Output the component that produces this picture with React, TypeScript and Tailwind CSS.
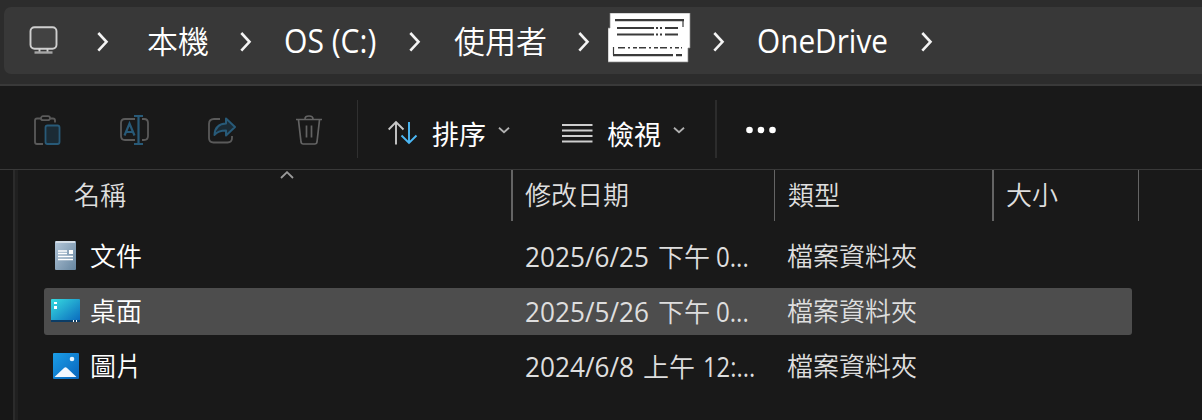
import React from 'react';

const Chevron = () => (
  <svg className="block h-5 w-3 shrink-0 translate-y-px" viewBox="0 0 12 20" fill="none" stroke="#f4f4f4" strokeWidth="2.6">
    <path d="M1.3 1 9.500 9.8 1.3 18.6" />
  </svg>
);

const SmallChevron = () => (
  <svg className="block h-[7px] w-3 shrink-0 translate-y-[3px]" viewBox="0 0 12 7" fill="none" stroke="#b0b0b0" strokeWidth="1.8">
    <path d="M1 .8 6 5.2 11 .8" />
  </svg>
);

const latin = "inline-block origin-left whitespace-pre font-['Open_Sans','Noto_Sans_CJK_TC',sans-serif]";
const cjk = "whitespace-nowrap font-['Noto_Sans_CJK_TC',sans-serif]";

const Monitor = () => (
  <svg className="block h-8 w-8" viewBox="0 0 32 32" fill="none" stroke="#cfcfcf" strokeWidth="1.9">
    <rect x="2.500" y="2.3" width="26" height="21.5" rx="4" fill="#424242" />
    <path d="M11.500 24v3M19.500 24v3" />
    <path d="M6.500 27.500h18" strokeWidth="2.400" stroke="#a5a5a5" />
  </svg>
);

const Scribble = () => (
  <svg className="block h-[50px] w-[83px]" viewBox="0 0 83 50" fill="none" stroke="#3a3a3a">
    <path d="M2 0h80v35h-2v14H0V15h2Z" fill="#fff" stroke="#8a8a8a" strokeWidth=".7" />
    <path d="M7 7.200h69M9 15h37M48 15h2M52 15h2M57 15h13M9 21.500h37M48 21.500h2M52 21.500h2M57 21.500h13M5 42.200h60M68 42.200h6" strokeWidth="2.200" />
    <path d="M75 7v7M5.500 34v8" strokeWidth="1.200" />
    <path d="M10 34.700h64" strokeWidth="1.600" strokeDasharray="7 3 2 3 4 2" />
  </svg>
);

const Paste = () => (
  <svg className="block h-8 w-8" viewBox="0 0 32 32" fill="none" stroke="#5a5a5a" strokeWidth="1.8">
    <path d="M9 4.500H5q-2 0-2 2V28q0 2 2 2h6M18 4.500h3q2 0 2 2v2" />
    <rect x="9" y="2.200" width="9" height="4" rx="2" />
    <rect x="13.500" y="11.500" width="14" height="18.500" rx="2" stroke="#285a78" fill="#1b2b35" />
  </svg>
);

const Rename = () => (
  <svg className="block h-8 w-8" viewBox="0 0 32 32" fill="none" stroke="#5a5a5a" strokeWidth="1.8">
    <path d="M16 5H6Q2 5 2 9v13q0 4 4 4h10M23 5h2q4 0 4 4v13q0 4-4 4h-2" />
    <path d="M5.5 21.500 10.500 9.500l5 12M7 18h7M19.500 2v28M15 2h9M15 30h9" stroke="#285a78" strokeWidth="2.200" />
  </svg>
);

const Share = () => (
  <svg className="block h-8 w-8" viewBox="0 0 32 32" fill="none" stroke="#5a5a5a" strokeWidth="1.8" strokeLinejoin="round">
    <path d="M13 5H7Q2 5 2 10v14q0 4.500 4.500 4.500h14q4.500 0 4.500-4.500v-2" />
    <path d="M19 4.500 28 13l-9 8.500v-5Q11 16.500 7.500 21 8 10 19 9.500Z" stroke="#285a78" strokeWidth="2" fill="#1b2b35" />
  </svg>
);

const Trash = () => (
  <svg className="block h-8 w-8" viewBox="0 0 32 32" fill="none" stroke="#636363" strokeWidth="1.7">
    <path d="M1 5.500h26M10 5q0-3 4-3T18 5M3.500 6 6 28q.3 2 2 2h12q1.700 0 2-2L24.500 6M11.500 11.500v12M16.500 11.500v12" />
  </svg>
);

const Sort = () => (
  <svg className="block h-7 w-[30px] translate-y-[2px]" viewBox="0 0 30 28" fill="none" strokeWidth="1.9">
    <path d="M8 24.500V2M.7 9.500 8 2l7.500 7.500" stroke="#c8c8c8" />
    <path d="M21 2v21.500M13.500 15.500l7.500 7.500 7.500-7.500" stroke="#4cb8f5" />
  </svg>
);

const Lines = () => (
  <svg className="block h-6 w-[31px] translate-y-[2px]" viewBox="0 0 31 24" stroke="#cecece" strokeWidth="2">
    <path d="M0 3h30.500M0 8.500h30.500M0 14h30.500M0 19.500h30.500" />
  </svg>
);

const DocIcon = () => (
  <svg className="block h-[30px] w-[30px] -translate-y-0.5" viewBox="0 0 30 30">
    <defs><linearGradient id="doc" x1="0" y1="0" x2="1" y2="1"><stop stopColor="#b4c7d9" /><stop offset="1" stopColor="#66859f" /></linearGradient></defs>
    <rect x="4" y="1" width="21" height="29" rx="1" fill="url(#doc)" />
    <path d="M5 2h19" stroke="#d3dde6" strokeWidth="2" />
    <path d="M7 11h9M7 13.500h9M7 16.500h15M7 19.500h15" stroke="#fff" strokeWidth="1.400" />
    <path d="M18 12h4" stroke="#fff" strokeWidth="4" />
  </svg>
);

const DesktopIcon = () => (
  <svg className="block h-[30px] w-[30px] -translate-y-px" viewBox="0 0 30 30">
    <defs><linearGradient id="desk" x1="0" y1="0" x2="1" y2="1"><stop stopColor="#37dce0" /><stop offset="1" stopColor="#0966bd" /></linearGradient></defs>
    <rect y="3" width="29" height="23" rx="1" fill="url(#desk)" />
    <path d="M0 24h29v2H0Z" fill="#0c3d66" />
    <path d="M3 6h3v2H3ZM3 10h3v3H3ZM22 24h1v2h-1ZM25 24h1v2h-1Z" fill="#fff" />
  </svg>
);

const PictureIcon = () => (
  <svg className="block h-[30px] w-[30px] -translate-y-px" viewBox="0 0 30 30">
    <defs><linearGradient id="pic" x1="0" y1="0" x2="1" y2="1"><stop stopColor="#1b9ee7" /><stop offset="1" stopColor="#0863bb" /></linearGradient></defs>
    <rect x="2" y="2" width="26" height="26" rx="1" fill="url(#pic)" />
    <path d="M3.500 26 13 17q1.500-1.500 3 0l9.500 9Z" fill="#f2f8ff" />
    <circle cx="21" cy="8" r="2.300" fill="#e6f5ff" />
  </svg>
);

type RowProps = { icon: React.ReactNode; name: string; date: React.ReactNode; selected?: boolean };

const Row = ({ icon, name, date, selected }: RowProps) => (
  <div className={`flex h-[47px] w-[1088px] items-center rounded-[3px] text-[26px] leading-[44px] ${selected ? 'bg-[#4d4d4d]' : ''}`}>
    <div className="w-[46px] pl-[7px]">{icon}</div>
    <div className={`w-[435px] pb-[3px] text-white ${cjk} font-[350]`}>{name}</div>
    <div className="w-[262px] whitespace-nowrap text-[#dedede]">{date}</div>
    <div className={`pb-[3px] text-[#dedede] ${cjk} font-[350]`}>檔案資料夾</div>
  </div>
);

type NumProps = { children: string; w: string; scale: string };

const Num = ({ children, w, scale }: NumProps) => (
  <span className={`inline-block ${w}`}><span className={`${latin} ${scale} text-[28px] font-normal`}>{children}</span></span>
);

export default function App() {
  return (
    <div className="flex h-[420px] w-[1202px] flex-col overflow-hidden bg-[#191919] text-white">
      <header className="h-[86px] shrink-0 border-b-2 border-[#393939] bg-[#2c2c2c] pt-[7px] pl-1">
        <div className="flex h-[67px] items-center rounded-l-[7px] bg-[#383838] pl-6 text-[31px] leading-[63px]">
          <div className="w-[69px]"><Monitor /></div>
          <div className="w-[50px]"><Chevron /></div>
          <div className={`w-[93px] pb-[3px] ${cjk} font-[350]`}>本機</div>
          <div className="w-[44px]"><Chevron /></div>
          <div className="w-[125px]"><span className={`${latin} scale-x-[0.94] text-[32px]`}>OS (C:)</span></div>
          <div className="w-[45px]"><Chevron /></div>
          <div className={`w-[124px] pb-[3px] ${cjk} font-[350]`}>使用者</div>
          <div className="w-[30px]"><Chevron /></div>
          <div className="w-[105px] -translate-y-[3px]"><Scribble /></div>
          <div className="w-[44px]"><Chevron /></div>
          <div className="w-[164px]"><span className={`${latin} scale-x-[0.93] text-[32px]`}>OneDrive</span></div>
          <Chevron />
        </div>
      </header>
      <nav className="flex h-[84px] shrink-0 items-center border-b border-[#393939] pl-8">
        <div className="w-[87px] pt-1"><Paste /></div>
        <div className="w-[88px] pt-1"><Rename /></div>
        <div className="w-[88px] pt-1"><Share /></div>
        <div className="w-[62px] pt-1"><Trash /></div>
        <div className="mt-[3px] h-[58px] w-[31px] border-l border-[#303030]" />
        <div className="w-11 pt-2"><Sort /></div>
        <div className={`w-[66px] pt-[13px] text-[27px] ${cjk} font-normal`}>排序</div>
        <div className="w-16"><SmallChevron /></div>
        <div className="w-[45px] pt-2"><Lines /></div>
        <div className={`w-[66px] pt-[13px] text-[27px] ${cjk} font-normal`}>檢視</div>
        <div className="w-[42px]"><SmallChevron /></div>
        <div className="mt-[3px] h-[58px] w-[31px] border-l-2 border-[#2c2c2c]" />
        <svg className="mt-1 h-2 w-[30px]" viewBox="0 0 30 8" fill="#fff"><circle cx="3.500" cy="4" r="3.300" /><circle cx="15" cy="4" r="3.300" /><circle cx="26.500" cy="4" r="3.300" /></svg>
      </nav>
      <main className="flex grow">
        <div className="w-[18px] shrink-0 border-r-[3px] border-[#202020] bg-[#171717] pl-[13px]">
          <div className="h-full w-0.5 bg-[#2b2b2b]" />
        </div>
        <div className="grow">
          <div className={`flex h-[51px] text-[26px] leading-[48px] text-[#dedede] ${cjk} font-[350]`}>
            <div className="flex w-[493px] pl-14">
              <div className="w-[206px]">名稱</div>
              <svg className="mt-px block h-2 w-[14px]" viewBox="0 0 14 8" fill="none" stroke="#9b9b9b" strokeWidth="1.800"><path d="M1 7 7 1.200 13 7" /></svg>
            </div>
            <div className="w-[263px] border-l-2 border-[#646464] pl-3">修改日期</div>
            <div className="w-[218px] border-l border-[#646464] pl-[13px]">類型</div>
            <div className="w-[146px] border-l-2 border-[#646464] pl-3">大小</div>
            <div className="border-l border-[#646464]" />
          </div>
          <div className="mt-3 flex flex-col gap-2 pl-[26px]">
            <Row icon={<DocIcon />} name="文件" date={<><Num w="w-[133px]" scale="scale-x-[0.935]">2025/6/25</Num><span className={`inline-block w-[58px] ${cjk} font-[350]`}>下午</span><Num w="w-[40px]" scale="scale-x-[0.86]">0...</Num></>} />
            <Row selected icon={<DesktopIcon />} name="桌面" date={<><Num w="w-[133px]" scale="scale-x-[0.935]">2025/5/26</Num><span className={`inline-block w-[58px] ${cjk} font-[350]`}>下午</span><Num w="w-[40px]" scale="scale-x-[0.86]">0...</Num></>} />
            <Row icon={<PictureIcon />} name="圖片" date={<><Num w="w-[118px]" scale="scale-x-[0.935]">2024/6/8</Num><span className={`inline-block w-[60px] ${cjk} font-[350]`}>上午</span><Num w="w-[60px]" scale="scale-x-[0.85]">12:...</Num></>} />
          </div>
        </div>
      </main>
    </div>
  );
}
